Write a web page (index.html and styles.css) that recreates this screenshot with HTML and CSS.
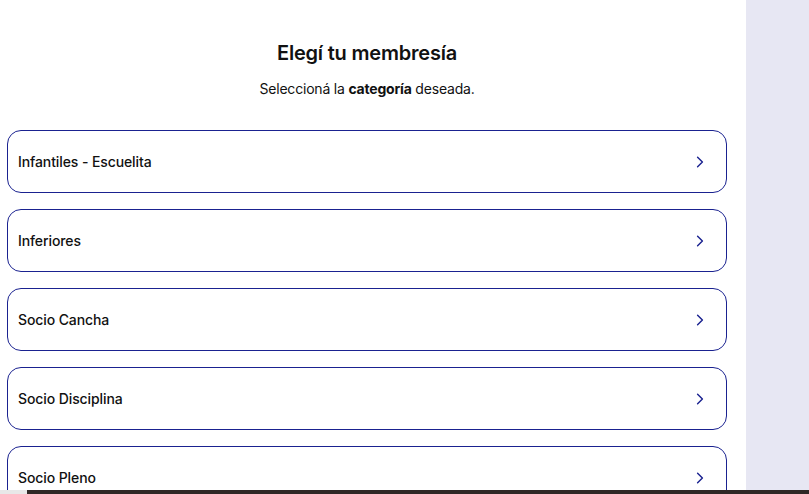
FILE: index.html
```html
<!DOCTYPE html>
<html lang="es">
<head>
<meta charset="utf-8">
<title>Elegí tu membresía</title>
<link rel="stylesheet" href="styles.css">
</head>
<body>
<div class="layout">
  <main class="main">
    <h1 class="title">Elegí tu membresía</h1>
    <p class="subtitle">Seleccioná la <strong>categoría</strong> deseada.</p>
    <ul class="list">
      <li class="item"><span>Infantiles - Escuelita</span><svg class="chev" viewBox="0 0 10 16"><path d="M2 2l6 6-6 6"/></svg></li>
      <li class="item"><span>Inferiores</span><svg class="chev" viewBox="0 0 10 16"><path d="M2 2l6 6-6 6"/></svg></li>
      <li class="item"><span>Socio Cancha</span><svg class="chev" viewBox="0 0 10 16"><path d="M2 2l6 6-6 6"/></svg></li>
      <li class="item"><span>Socio Disciplina</span><svg class="chev" viewBox="0 0 10 16"><path d="M2 2l6 6-6 6"/></svg></li>
      <li class="item"><span>Socio Pleno</span><svg class="chev" viewBox="0 0 10 16"><path d="M2 2l6 6-6 6"/></svg></li>
    </ul>
  </main>
  <aside class="side"></aside>
</div>
<div class="bottombar"><div class="bb-left"></div><div class="bb-right"></div></div>
</body>
</html>
```

FILE: styles.css
```css
html, body {
  margin: 0;
  padding: 0;
  height: 100%;
  overflow: hidden;
}
body {
  font-family: Inter, "Noto Sans", sans-serif;
  color: #111;
  background: #fff;
}
.layout {
  display: flex;
  height: 100%;
}
.main {
  width: 746px;
  box-sizing: border-box;
  padding: 40px 19px 0 7px;
}
.side {
  flex: 1;
  background: #e7e7f3;
}
.title {
  margin: 0;
  text-align: center;
  font-size: 20px;
  font-weight: 600;
  line-height: 26px;
  letter-spacing: -0.2px;
}
.subtitle {
  margin: 14px 0 0;
  text-align: center;
  font-size: 14px;
  line-height: 18px;
  letter-spacing: -0.2px;
}
.subtitle strong {
  font-weight: 700;
}
.list {
  list-style: none;
  margin: 32px 0 0;
  padding: 0;
  display: flex;
  flex-direction: column;
  gap: 16px;
}
.item {
  height: 63px;
  box-sizing: border-box;
  border: 1px solid #1a2290;
  border-radius: 14px;
  display: flex;
  align-items: center;
  justify-content: space-between;
  padding: 0 22px 0 10px;
  font-size: 14px;
  font-weight: 500;
  letter-spacing: -0.1px;
}
.chev {
  width: 8px;
  height: 14px;
  fill: none;
  stroke: #1a2290;
  stroke-width: 1.8;
  stroke-linecap: round;
  stroke-linejoin: round;
}
.bottombar {
  position: fixed;
  left: 0;
  right: 0;
  bottom: 0;
  height: 4px;
  display: flex;
}
.bb-left {
  width: 27px;
  background: #e8e8e8;
}
.bb-right {
  flex: 1;
  background: #2f2826;
}
```
